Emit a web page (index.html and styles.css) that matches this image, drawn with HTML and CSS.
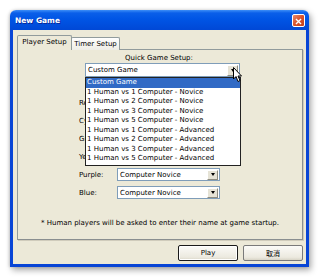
FILE: index.html
```html
<!DOCTYPE html>
<html>
<head>
    <meta charset="UTF-8">
    <title>New Game</title>
    <link rel="stylesheet" href="styles.css">
</head>
<body>
    <div class="window">
        <div class="titlebar">
            <span class="title">New Game</span>
            <span class="close">
                <svg width="13" height="13" viewBox="0 0 13 13">
                    <path d="M3.5 3.5 L9.5 9.5 M9.5 3.5 L3.5 9.5" stroke="#fff" stroke-width="1.6" fill="none"/>
                </svg>
            </span>
        </div>

        <div class="frame">
            <div class="tabs">
                <div class="tab active">Player Setup</div>
                <div class="tab">Timer Setup</div>
            </div>

            <div class="panel">
                <div class="quick-label">Quick Game Setup:</div>
                <div class="combo quick-combo">
                    <span class="combo-text">Custom Game</span>
                    <span class="combo-btn"></span>

                    <ul class="droplist">
                        <li class="selected">Custom Game</li>
                        <li>1 Human vs 1 Computer - Novice</li>
                        <li>1 Human vs 2 Computer - Novice</li>
                        <li>1 Human vs 3 Computer - Novice</li>
                        <li>1 Human vs 5 Computer - Novice</li>
                        <li>1 Human vs 1 Computer - Advanced</li>
                        <li>1 Human vs 2 Computer - Advanced</li>
                        <li>1 Human vs 3 Computer - Advanced</li>
                        <li>1 Human vs 5 Computer - Advanced</li>
                    </ul>

                    <svg class="cursor" width="10" height="16" viewBox="0 0 10 16">
                        <path d="M0.5 0.5 L0.5 12 L3 9.5 L5 14.5 L7 13.5 L5 9 L8.5 9 Z" fill="#fff" stroke="#000" stroke-width="1"/>
                    </svg>
                </div>

                <div class="players">
                    <div class="player-row"><label>Red:</label><div class="combo"><span class="combo-text">Human</span><span class="combo-btn"></span></div></div>
                    <div class="player-row"><label>Cyan:</label><div class="combo"><span class="combo-text">Computer Novice</span><span class="combo-btn"></span></div></div>
                    <div class="player-row"><label>Green:</label><div class="combo"><span class="combo-text">Computer Novice</span><span class="combo-btn"></span></div></div>
                    <div class="player-row"><label>Yellow:</label><div class="combo"><span class="combo-text">Computer Novice</span><span class="combo-btn"></span></div></div>
                    <div class="player-row"><label>Purple:</label><div class="combo"><span class="combo-text">Computer Novice</span><span class="combo-btn"></span></div></div>
                    <div class="player-row"><label>Blue:</label><div class="combo"><span class="combo-text">Computer Novice</span><span class="combo-btn"></span></div></div>
                </div>

                <p class="note">* Human players will be asked to enter their name at game startup.</p>
            </div>

            <div class="buttons">
                <button class="btn btn-default">Play</button>
                <button class="btn">取消</button>
            </div>
        </div>
    </div>
</body>
</html>
```

FILE: styles.css
```css
:root {
    --face: #ece9d8;
    --xp-blue: #0845d6;
    --tab-border: #919b9c;
}

body {
    margin: 0;
    padding: 10px;
    background: #fff;
    font-family: "DejaVu Sans", "Noto Sans CJK SC", sans-serif;
    font-size: 7px;
    color: #000;
}

.window {
    width: 299px;
    height: 257px;
    display: flex;
    flex-direction: column;
    border-radius: 6px 6px 0 0;
    box-shadow: 2px 3px 6px rgba(0,0,0,0.35), -1px 0 3px rgba(0,0,0,0.15);
}

.titlebar {
    height: 20px;
    flex: none;
    display: flex;
    align-items: center;
    justify-content: space-between;
    padding: 0 4px 0 5px;
    border-radius: 6px 6px 0 0;
    background: linear-gradient(#3d8ef7 0, #0a5fe9 3px, #0055e5 45%, #0048d6 100%);
}

.title {
    color: #fff;
    font-weight: bold;
    font-size: 7.5px;
    text-shadow: 1px 1px #0a2a9c;
}

.close {
    width: 13px;
    height: 13px;
    box-sizing: border-box;
    border: 1px solid #fff;
    border-radius: 2px;
    background: linear-gradient(135deg, #e98b6d, #d8532c 50%, #c1401c);
    display: flex;
}

.frame {
    flex: 1;
    display: flex;
    flex-direction: column;
    background: var(--face);
    border: 3px solid var(--xp-blue);
    border-top: 0;
    padding: 5px 3px 3px 4px;
}

.tabs {
    display: flex;
    align-items: flex-end;
    height: 15px;
    margin-bottom: -1px;
    position: relative;
    z-index: 1;
}

.tab {
    box-sizing: border-box;
    width: 49px;
    height: 13px;
    line-height: 12px;
    text-align: center;
    border: 1px solid var(--tab-border);
    border-bottom: 0;
    border-radius: 2px 2px 0 0;
    background: linear-gradient(#fefefe, #eeede6);
}

.tab.active {
    width: 55px;
    height: 15px;
    line-height: 13px;
    margin-right: -1px;
    background: var(--face);
    z-index: 2;
}

.panel {
    flex: 1;
    border: 1px solid var(--tab-border);
    border-right-color: #8a8f90;
    border-bottom-color: #8a8f90;
    box-shadow: 1px 1px 0 #d0ccbc;
}

.quick-label {
    margin-top: 3px;
    line-height: 10px;
    text-align: center;
    padding-right: 2px;
}

.combo {
    position: relative;
    box-sizing: border-box;
    height: 13px;
    display: flex;
    align-items: center;
    justify-content: space-between;
    background: #fff;
    border: 1px solid #7f9db9;
    padding: 0 1px 0 2px;
}

.quick-combo {
    width: 155px;
    height: 14px;
    margin-left: 67px;
}

.combo-btn {
    width: 11px;
    height: 10px;
    box-sizing: border-box;
    background: #e6e3d6;
    border: 1px solid;
    border-color: #fff #8e8c80 #8e8c80 #fff;
    display: flex;
    align-items: center;
    justify-content: center;
}

.combo-btn::after {
    content: "";
    border-left: 2.5px solid transparent;
    border-right: 2.5px solid transparent;
    border-top: 3px solid #000;
}

.quick-combo .combo-btn {
    height: 11px;
}

.droplist {
    position: absolute;
    left: -1px;
    top: 13px;
    width: 156px;
    height: 89px;
    box-sizing: border-box;
    margin: 0;
    padding: 0;
    list-style: none;
    background: #fff;
    border: 1px solid #222;
    z-index: 5;
}

.droplist li {
    height: 9.5px;
    line-height: 9.5px;
    padding-left: 1px;
    white-space: nowrap;
}

.droplist .selected {
    background: #316ac5;
    color: #fff;
}

.cursor {
    position: absolute;
    left: 147px;
    top: 3px;
    z-index: 6;
}

.players {
    margin-top: 19px;
    display: flex;
    flex-direction: column;
    gap: 5px;
}

.player-row {
    display: flex;
    align-items: center;
    padding-left: 61px;
}

.player-row label {
    width: 38px;
}

.player-row .combo {
    width: 103px;
}

.note {
    margin: 19px 0 0;
    line-height: 10px;
    text-align: center;
}

.buttons {
    display: flex;
    justify-content: flex-end;
    gap: 5px;
    margin-top: 5px;
}

.btn {
    width: 60px;
    height: 16px;
    padding: 0;
    font: inherit;
    color: #000;
    border: 1px solid #7a7a7a;
    border-radius: 2px;
    background: linear-gradient(#fbfbf8, #ece9df 80%, #d8d4c6);
}

.btn-default {
    border: 1px solid #1a1a1a;
    box-shadow: inset 0 0 0 1px #fff;
}
```
